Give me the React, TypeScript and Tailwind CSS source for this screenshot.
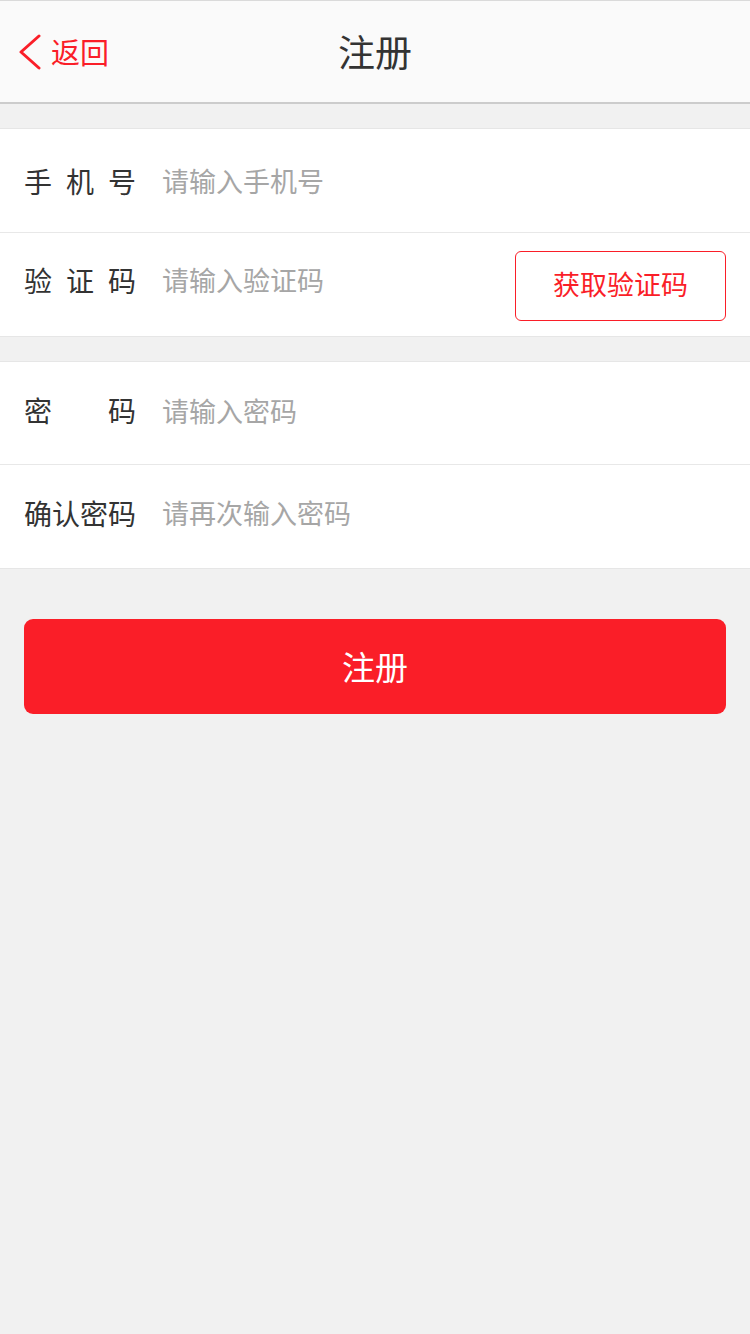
import React from "react";

const font = { fontFamily: '"Noto Sans CJK SC", "Noto Sans", sans-serif' };

function Label({ chars }: { chars: string[] }) {
  return (
    <div className="flex w-[112px] shrink-0 justify-between text-[28px] leading-none text-[#333333]">
      {chars.map((c, i) => (
        <span key={i}>{c}</span>
      ))}
    </div>
  );
}

function Row({
  chars,
  placeholder,
  type = "text",
  cls,
  children,
}: {
  chars: string[];
  placeholder: string;
  type?: string;
  cls: string;
  children?: React.ReactNode;
}) {
  return (
    <div className={"flex items-center pl-[24px] pr-[24px] " + cls}>
      <Label chars={chars} />
      <input
        type={type}
        placeholder={placeholder}
        style={font}
        className="ml-[26px] min-w-0 flex-1 bg-transparent text-[27px] leading-none text-[#333333] outline-none placeholder:text-[#a6a6a6]"
      />
      {children}
    </div>
  );
}

export default function App() {
  return (
    <div style={font} className="min-h-[1334px] w-[750px] bg-[#f1f1f1]">
      <header className="relative flex h-[104px] items-center border-t border-b-2 border-t-[#dadada] border-b-[#cccccc] bg-[#fafafa]">
        <button className="ml-[18px] flex items-center text-[#fa1e28]" style={font}>
          <svg width="24" height="36" viewBox="0 0 24 36" fill="none">
            <polyline points="21,2 3,18 21,34" stroke="#fa1e28" strokeWidth="3" strokeLinecap="round" strokeLinejoin="round" />
          </svg>
          <span className="ml-[9px] text-[29px] leading-none">返回</span>
        </button>
        <h1 className="absolute left-1/2 -translate-x-1/2 text-[37px] leading-none text-[#333333]">注册</h1>
      </header>

      <section className="mt-[24px] border-y border-[#e6e6e6] bg-white">
        <Row cls="h-[103px]" chars={["手", "机", "号"]} placeholder="请输入手机号" type="tel" />
        <div className="h-px bg-[#e8e8e8]" />
        <Row cls="h-[103px] pb-[10px]" chars={["验", "证", "码"]} placeholder="请输入验证码">
          <button
            style={font}
            className="mt-[13px] flex h-[70px] w-[211px] shrink-0 items-center justify-center rounded-[6px] border border-[#fa1e28] bg-white pb-[5px] text-[27px] leading-none text-[#fa1e28]"
          >
            获取验证码
          </button>
        </Row>
      </section>

      <section className="mt-[24px] border-y border-[#e6e6e6] bg-white">
        <Row cls="h-[102px] pb-[6px]" chars={["密", "码"]} placeholder="请输入密码" type="password" />
        <div className="h-px bg-[#e8e8e8]" />
        <Row cls="h-[103px] pb-[8px]" chars={["确", "认", "密", "码"]} placeholder="请再次输入密码" type="password" />
      </section>

      <div className="px-[24px] pt-[50px]">
        <button
          style={font}
          className="flex h-[95px] w-full items-center justify-center rounded-[9px] bg-[#fa1e28] text-[33px] leading-none text-white"
        >
          注册
        </button>
      </div>
    </div>
  );
}
